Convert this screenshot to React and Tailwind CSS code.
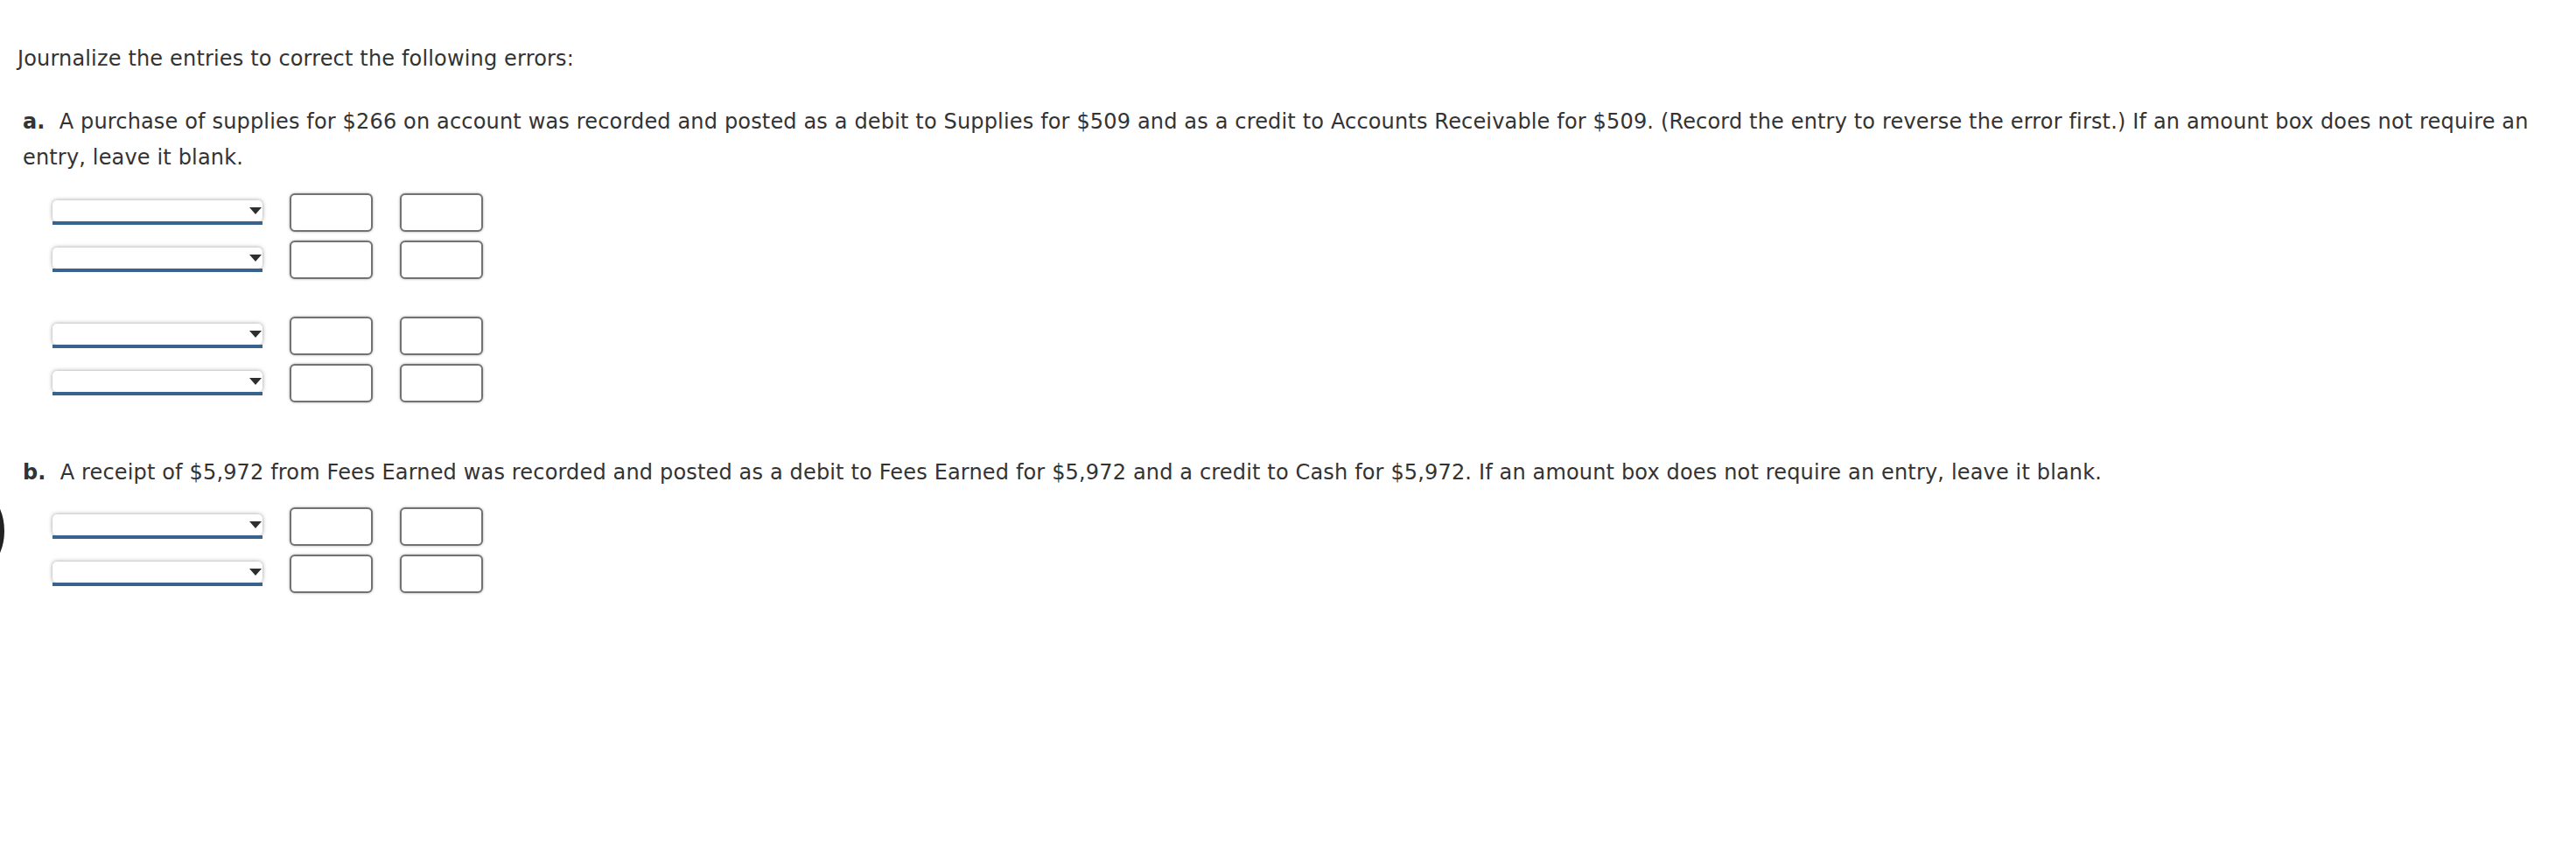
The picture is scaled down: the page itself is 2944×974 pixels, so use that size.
import React from 'react';

const Dropdown = () => (
    <div className="w-[240px] flex flex-col">
        <div className="h-[24px] bg-white rounded-[5px] shadow-[0_0_5px_rgba(0,0,0,0.4)] flex justify-end items-start pt-[8px] pr-px">
            <span className="w-0 h-0 border-l-[7px] border-r-[7px] border-t-[8px] border-l-transparent border-r-transparent border-t-[#2f2f2f]" />
        </div>
        <div className="h-[4px] bg-[#38638f]" />
    </div>
);

const AmountBox = () => (
    <input
        type="text"
        className="w-[95px] h-[44px] bg-white border-2 border-[#727272] rounded-[6px] shadow-[0_0_3px_rgba(0,0,0,0.35)] outline-none"
    />
);

const EntryRow = () => (
    <div className="flex items-center gap-[31px]">
        <Dropdown />
        <AmountBox />
        <AmountBox />
    </div>
);

const EntryGroup = () => (
    <div className="flex flex-col gap-[10px]">
        <EntryRow />
        <EntryRow />
    </div>
);

export default function App() {
    return (
        <div className="relative min-h-[974px] w-[2944px] bg-white text-[#333] font-['DejaVu_Sans',sans-serif] text-[24px] leading-[41px] tracking-[0.16px] overflow-hidden">
            {/* cut-off circle at the left edge */}
            <div className="absolute left-[-123px] top-[543px] w-[128px] h-[128px] rounded-full border-[5px] border-[#222]" />

            <div className="pt-[47px] pl-[20px]">
                <p>Journalize the entries to correct the following errors:</p>
            </div>

            <div className="mt-[31px] pl-[26px] pr-[40px]">
                <p className="mb-[20px]">
                    <b className="mr-[16px]">a.</b>
                    A purchase of supplies for $266 on account was recorded and posted as a debit to Supplies for $509 and as a credit to Accounts Receivable for $509. (Record the entry to reverse the error first.) If an amount box does not require an entry, leave it blank.
                </p>
                <div className="pl-[34px] flex flex-col gap-[43px]">
                    <EntryGroup />
                    <EntryGroup />
                </div>

                <p className="mt-[60px] mb-[19px]">
                    <b className="mr-[16px]">b.</b>
                    A receipt of $5,972 from Fees Earned was recorded and posted as a debit to Fees Earned for $5,972 and a credit to Cash for $5,972. If an amount box does not require an entry, leave it blank.
                </p>
                <div className="pl-[34px]">
                    <EntryGroup />
                </div>
            </div>
        </div>
    );
}
